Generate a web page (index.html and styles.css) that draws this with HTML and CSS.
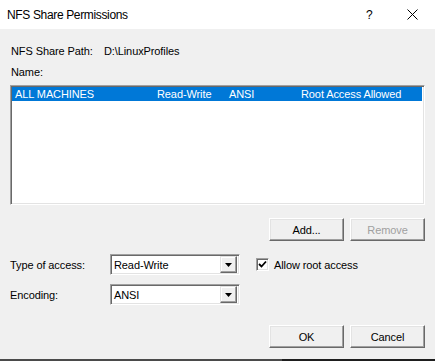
FILE: index.html
```html
<!DOCTYPE html>
<html>
<head>
<meta charset="utf-8">
<link rel="stylesheet" href="styles.css">
</head>
<body>
<div class="window">
  <div class="titlebar">
    <span class="title">NFS Share Permissions</span>
    <span class="help">?</span>
    <span class="close"><svg width="11" height="11" viewBox="0 0 11 11"><path d="M0.5 0.5 L10.5 10.5 M10.5 0.5 L0.5 10.5" stroke="#000" stroke-width="1" fill="none"/></svg></span>
  </div>
  <div class="content">
    <div class="path-row">
      <span class="path-label">NFS Share Path:</span>
      <span class="path-value">D:\LinuxProfiles</span>
    </div>
    <div class="name-label">Name:</div>
    <div class="listbox">
      <div class="row selected">
        <span class="c1">ALL MACHINES</span>
        <span class="c2">Read-Write</span>
        <span class="c3">ANSI</span>
        <span class="c4">Root Access Allowed</span>
      </div>
    </div>
    <div class="btn-row top-btns">
      <button class="btn">Add...</button>
      <button class="btn disabled">Remove</button>
    </div>
    <div class="field-row first">
      <span class="field-label">Type of access:</span>
      <div class="combo"><span class="combo-text">Read-Write</span><span class="combo-btn"><svg width="7" height="4" viewBox="0 0 7 4"><path d="M0 0 H7 L3.5 4 Z" fill="#000"/></svg></span></div>
      <label class="check"><span class="box"><svg width="9" height="9" viewBox="0 0 9 9"><path d="M1 4 L3.5 6.5 L8 1.5" stroke="#000" stroke-width="1.8" fill="none"/></svg></span><span>Allow root access</span></label>
    </div>
    <div class="field-row second">
      <span class="field-label">Encoding:</span>
      <div class="combo"><span class="combo-text">ANSI</span><span class="combo-btn"><svg width="7" height="4" viewBox="0 0 7 4"><path d="M0 0 H7 L3.5 4 Z" fill="#000"/></svg></span></div>
    </div>
    <div class="btn-row bottom-btns">
      <button class="btn">OK</button>
      <button class="btn">Cancel</button>
    </div>
  </div>
  <div class="desktop-strip"><span class="strip-left"></span><span class="strip-right"></span></div>
</div>
</body>
</html>
```
FILE: styles.css
```css
* { box-sizing: border-box; }
html, body { margin: 0; padding: 0; }
body {
  width: 435px;
  height: 361px;
  overflow: hidden;
  background: #f0f0f0;
  font-family: "Liberation Sans", Arial, sans-serif;
  font-size: 11px;
  letter-spacing: -0.1px;
  color: #000;
}
.window {
  display: flex;
  flex-direction: column;
  height: 361px;
}
.titlebar {
  height: 29px;
  background: #fff;
  display: flex;
  align-items: center;
  padding-left: 7px;
}
.title {
  font-size: 12px;
  letter-spacing: -0.35px;
  flex: 1;
  padding-top: 1px;
}
.help {
  font-size: 12px;
  width: 12px;
  margin-right: 29px;
}
.close {
  display: flex;
  margin-right: 17px;
}
.content {
  flex: 1;
  padding: 0 10px 0 10px;
  display: flex;
  flex-direction: column;
}
.path-row {
  margin-top: 16px;
  height: 13px;
  line-height: 13px;
  display: flex;
  padding-left: 1px;
}
.path-label { width: 93px; }
.name-label {
  margin-top: 8px;
  height: 13px;
  line-height: 13px;
  padding-left: 1px;
}
.listbox {
  margin-top: 6px;
  height: 120px;
  background: #fff;
  border: 1px solid;
  border-color: #a0a0a0 #fff #fff #a0a0a0;
  box-shadow: inset 1px 1px 0 #696969, inset -1px -1px 0 #e3e3e3;
  padding: 1px 2px 1px 1px;
}
.row {
  height: 14px;
  line-height: 14px;
  display: flex;
  padding-left: 3px;
}
.row.selected {
  background: #0078d7;
  color: #fff;
}
.c1 { width: 142px; }
.c2 { width: 72px; }
.c3 { width: 72px; }
.btn-row {
  display: flex;
  justify-content: flex-end;
  gap: 6px;
}
.top-btns { margin-top: 13px; }
.bottom-btns { margin-top: 20px; }
.btn {
  width: 75px;
  height: 23px;
  font-family: "Liberation Sans", Arial, sans-serif;
  font-size: 11px;
  letter-spacing: -0.1px;
  color: #000;
  background: #f0f0f0;
  border: 1px solid;
  border-color: #fff #696969 #696969 #fff;
  box-shadow: inset -1px -1px 0 #a0a0a0, inset 1px 1px 0 #e3e3e3;
  padding: 0;
}
.btn.disabled { color: #a0a0a0; }
.field-row {
  display: flex;
  align-items: center;
  height: 21px;
}
.field-row.first { margin-top: 13px; }
.field-row.second { margin-top: 9px; }
.field-label {
  width: 100px;
}
.combo {
  width: 130px;
  height: 21px;
  background: #fff;
  border: 1px solid;
  border-color: #a0a0a0 #fff #fff #a0a0a0;
  box-shadow: inset 1px 1px 0 #696969, inset -1px -1px 0 #e3e3e3;
  display: flex;
  align-items: center;
  padding: 2px 2px 2px 2px;
}
.combo-text { flex: 1; padding-left: 1px; }
.combo-btn {
  width: 17px;
  height: 17px;
  background: #f0f0f0;
  border: 1px solid;
  border-color: #e3e3e3 #696969 #696969 #e3e3e3;
  box-shadow: inset -1px -1px 0 #a0a0a0, inset 1px 1px 0 #fff;
  display: flex;
  align-items: center;
  justify-content: center;
}
.check {
  margin-left: 16px;
  display: flex;
  align-items: center;
  gap: 5px;
}
.box {
  width: 13px;
  height: 13px;
  background: #fff;
  border: 1px solid;
  border-color: #a0a0a0 #fff #fff #a0a0a0;
  box-shadow: inset 1px 1px 0 #696969, inset -1px -1px 0 #e3e3e3;
  display: flex;
  align-items: center;
  justify-content: center;
}
.desktop-strip {
  height: 2px;
  display: flex;
}
.strip-left { width: 282px; background: #4a4a4a; }
.strip-right { flex: 1; background: #1e1e1e; }
```
